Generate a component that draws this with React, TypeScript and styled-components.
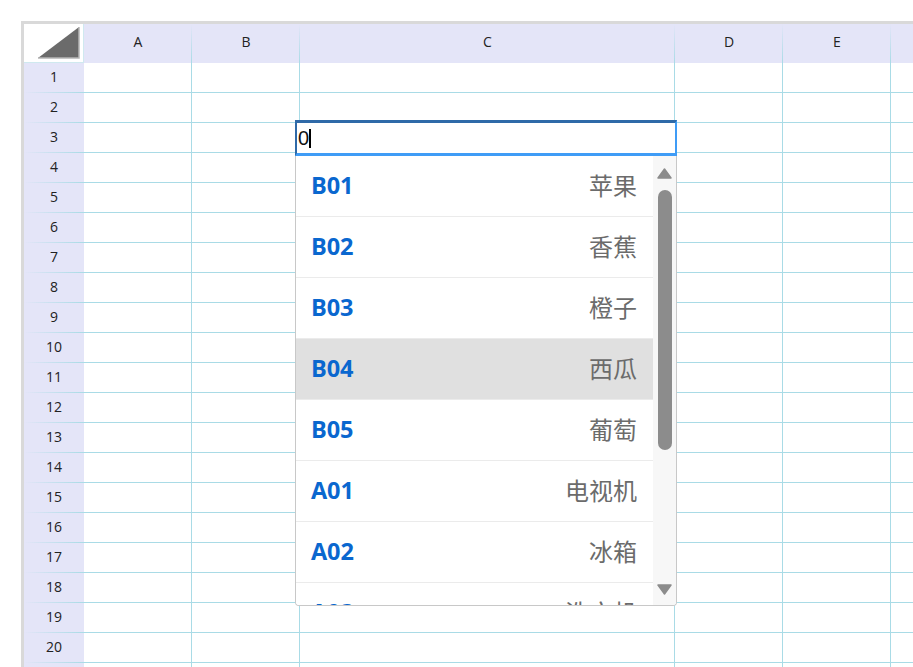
import React from "react";
import styled, { createGlobalStyle } from "styled-components";

const LINE = "#a9dbe6";
const HEAD_BG = "#e4e5f8";

const Global = createGlobalStyle`
  html, body { margin: 0; padding: 0; background: #ffffff; overflow: hidden; }
  body { font-family: "Open Sans", "Noto Sans", "Noto Sans CJK SC", sans-serif; }
`;

const Page = styled.div`
  padding: 21px 0 0 21px;
  width: 913px;
  height: 667px;
  box-sizing: border-box;
  overflow: hidden;
`;

const Sheet = styled.div`
  position: relative;
  border-top: 3px solid #d9d9d9;
  border-left: 3px solid #d9d9d9;
  width: 1100px;
`;

const Grid = styled.div`
  display: grid;
  grid-template-columns: 60px 108px 108px 375px 108px 108px 108px;
  grid-auto-rows: 30px;
  grid-template-rows: 39px;
`;

const Corner = styled.div`
  background: #ffffff;
  border-right: 1px solid #cfe9ef;
  border-bottom: 1px solid #cfe9ef;
  box-sizing: border-box;
  display: flex;
  align-items: flex-end;
  justify-content: flex-end;
  padding: 0 2px 3px 0;
`;

const ColHead = styled.div`
  background: linear-gradient(to bottom, rgba(169, 219, 230, 0), ${LINE}) right top / 1px 100% no-repeat,
    ${HEAD_BG};
  display: flex;
  align-items: center;
  justify-content: center;
  padding-bottom: 5px;
  box-sizing: border-box;
  font-size: 14px;
  color: #222;
`;

const RowHead = styled.div`
  background: linear-gradient(to right, rgba(169, 219, 230, 0), ${LINE}) left bottom / 100% 1px no-repeat,
    ${HEAD_BG};
  display: flex;
  align-items: center;
  justify-content: center;
  padding-bottom: 4px;
  box-sizing: border-box;
  font-size: 14px;
  color: #222;
`;

const Cell = styled.div`
  background: #fff;
  border-right: 1px solid ${LINE};
  border-bottom: 1px solid ${LINE};
  box-sizing: border-box;
`;

const Editor = styled.div`
  position: absolute;
  left: 271px;
  top: 96px;
  width: 382px;
  height: 36px;
  box-sizing: border-box;
  background: #fff;
  border-style: solid;
  border-width: 3px 2px 3px 2px;
  border-color: #2f6aa8 #3f9cf6 #3f9cf6 #2f6aa8;
  display: flex;
  align-items: center;
  padding-left: 1px;
  font-family: "Liberation Sans", "Noto Sans", sans-serif;
  font-size: 20px;
  color: #111;
`;

const Caret = styled.span`
  display: inline-block;
  width: 2px;
  height: 19px;
  background: #000;
`;

const Dropdown = styled.div`
  position: absolute;
  left: 271px;
  top: 132px;
  width: 382px;
  height: 450px;
  box-sizing: border-box;
  border: 1px solid #c8c8c8;
  border-top: none;
  border-radius: 0 0 4px 4px;
  background: #fff;
  display: flex;
  overflow: hidden;
`;

const List = styled.div`
  flex: 1;
  overflow: hidden;
`;

const Item = styled.div<{ $active?: boolean }>`
  height: 61px;
  box-sizing: border-box;
  border-bottom: 1px solid #ebebeb;
  background: ${(p) => (p.$active ? "#e0e0e0" : "#fff")};
  display: flex;
  align-items: center;
  justify-content: space-between;
  padding: 0 16px 3px 15px;
`;

const Code = styled.span`
  font-family: "Open Sans", "Noto Sans", sans-serif;
  font-weight: 700;
  font-size: 23.5px;
  color: #0a67cf;
  letter-spacing: -0.1px;
`;

const Name = styled.span`
  font-family: "Noto Sans CJK SC", "Noto Sans", sans-serif;
  font-size: 24px;
  color: #6b6b6b;
`;

const ScrollBar = styled.div`
  width: 23px;
  background: #f7f7f7;
  display: flex;
  flex-direction: column;
  align-items: center;
  padding: 12px 0 10px;
  box-sizing: border-box;
`;

const Arrow = styled.svg`
  width: 15px;
  height: 11px;
  flex: none;
`;

const Thumb = styled.div`
  width: 14px;
  height: 260px;
  border-radius: 7px;
  background: #8c8c8c;
  margin-top: 11px;
  flex: none;
`;

const Spacer = styled.div`
  flex: 1;
`;

const cols = ["A", "B", "C", "D", "E", "F"];
const items: [string, string][] = [
  ["B01", "苹果"],
  ["B02", "香蕉"],
  ["B03", "橙子"],
  ["B04", "西瓜"],
  ["B05", "葡萄"],
  ["A01", "电视机"],
  ["A02", "冰箱"],
  ["A03", "洗衣机"],
];

export default function App() {
  const rows = Array.from({ length: 21 }, (_, i) => i + 1);
  return (
    <Page>
      <Global />
      <Sheet>
        <Grid>
          <Corner>
            <svg width="44" height="33" viewBox="0 0 44 33">
              <polygon points="1,32 42,1 42,32" fill="#6b6b6b" />
              <polyline points="1,32 42,32 42,1" fill="none" stroke="#b5b5b5" strokeWidth="1.5" />
            </svg>
          </Corner>
          {cols.map((c) => (
            <ColHead key={c}>{c === "F" ? "" : c}</ColHead>
          ))}
          {rows.map((r) => (
            <React.Fragment key={r}>
              <RowHead>{r <= 20 ? r : ""}</RowHead>
              {cols.map((c) => (
                <Cell key={c} />
              ))}
            </React.Fragment>
          ))}
        </Grid>
        <Editor>
          0<Caret />
        </Editor>
        <Dropdown>
          <List>
            {items.map(([code, name]) => (
              <Item key={code} $active={code === "B04"}>
                <Code>{code}</Code>
                <Name>{name}</Name>
              </Item>
            ))}
          </List>
          <ScrollBar>
            <Arrow viewBox="0 0 15 11">
              <path d="M7.5 1 L14 10 L1 10 Z" fill="#8c8c8c" stroke="#8c8c8c" strokeWidth="1.5" strokeLinejoin="round" />
            </Arrow>
            <Thumb />
            <Spacer />
            <Arrow viewBox="0 0 15 11">
              <path d="M1 1 L14 1 L7.5 10 Z" fill="#8c8c8c" stroke="#8c8c8c" strokeWidth="1.5" strokeLinejoin="round" />
            </Arrow>
          </ScrollBar>
        </Dropdown>
      </Sheet>
    </Page>
  );
}
